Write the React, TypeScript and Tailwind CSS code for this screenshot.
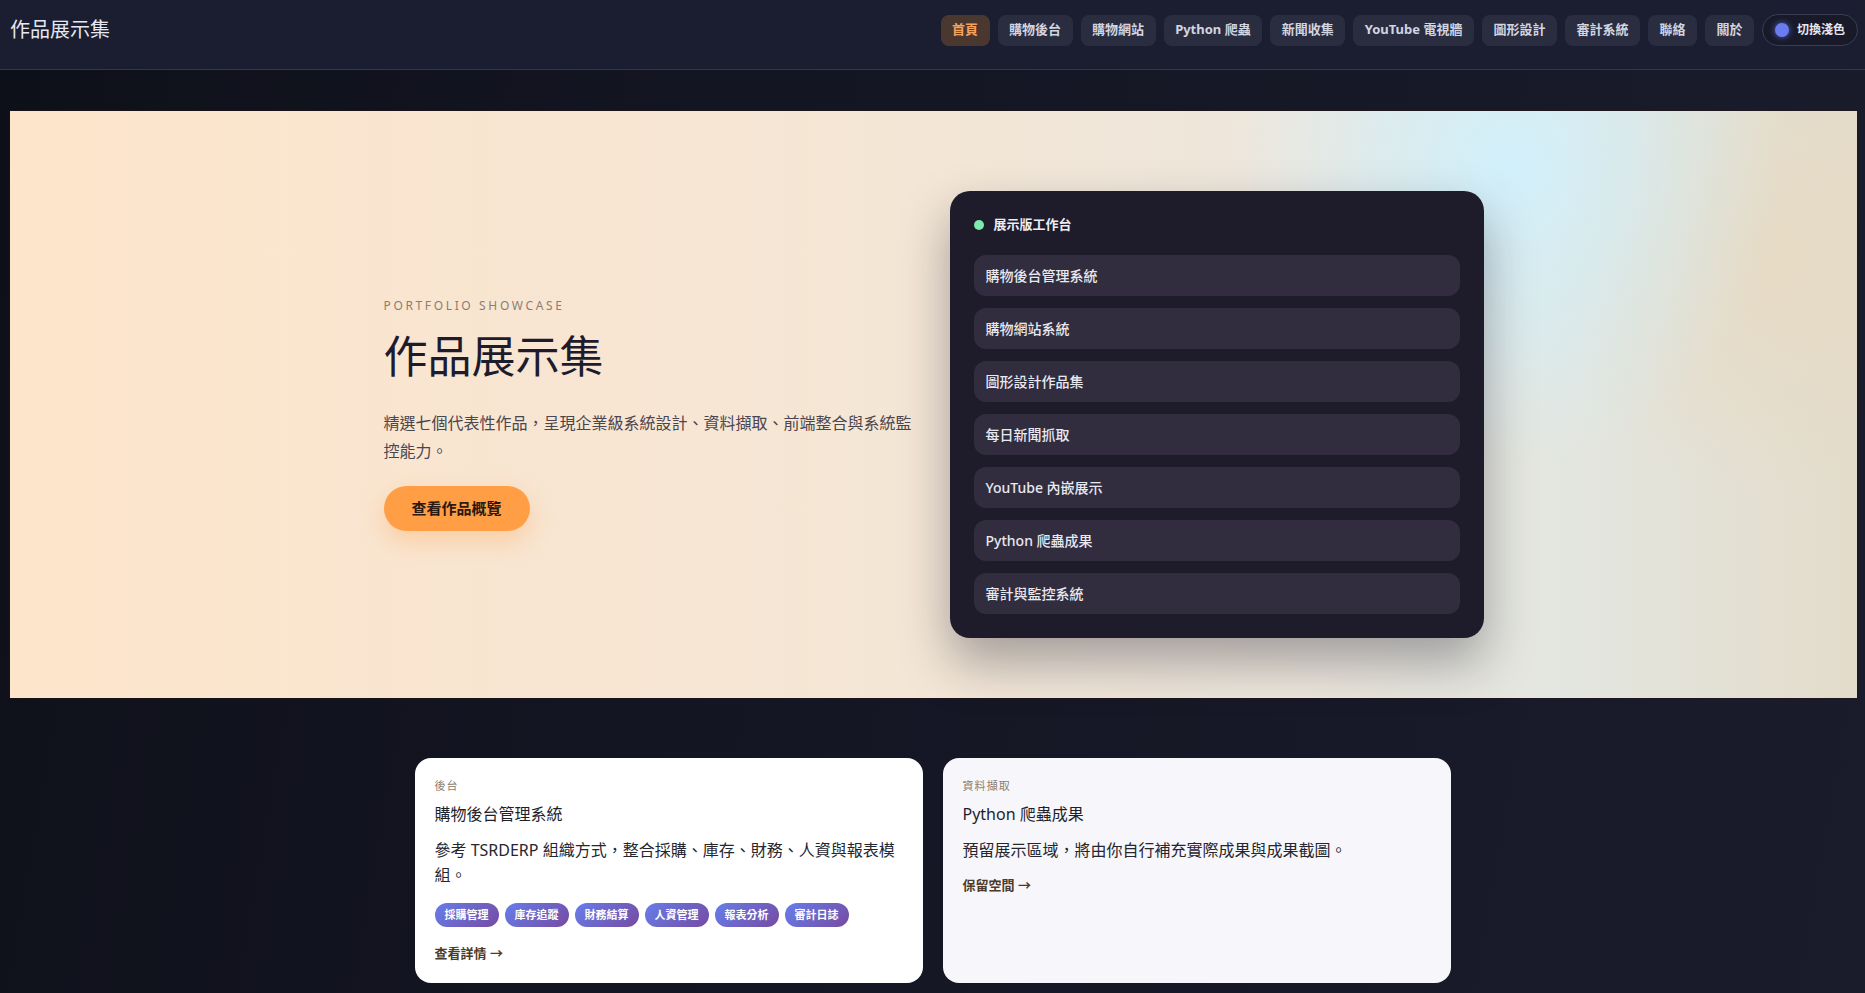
import React from "react";

const navItems = ["首頁", "購物後台", "購物網站", "Python 爬蟲", "新聞收集", "YouTube 電視牆", "圖形設計", "審計系統", "聯絡", "關於"];

const rows = ["購物後台管理系統", "購物網站系統", "圖形設計作品集", "每日新聞抓取", "YouTube 內嵌展示", "Python 爬蟲成果", "審計與監控系統"];

const tags = ["採購管理", "庫存追蹤", "財務結算", "人資管理", "報表分析", "審計日誌"];

export default function App() {
  return (
    <div className="min-h-screen bg-[linear-gradient(100deg,#0e1019_0%,#151624_45%,#1a1c2c_100%)] font-['Noto_Sans','Noto_Sans_CJK_TC',sans-serif]">
      <header className="h-[70px] flex justify-between items-start pl-[10px] pr-[7px] bg-[#1b1e30] border-b border-[#34374b]">
        <div className="mt-[16px] text-[20px] leading-[28px] text-[#e6e8f2]">作品展示集</div>
        <nav className="mt-[14px] flex items-center gap-2">
          {navItems.map((n, i) => (
            <button
              key={n}
              className={
                i === 0
                  ? "h-[31px] px-[11.5px] rounded-lg text-[13px] font-bold bg-[#4a3830] text-[#f4a25c] whitespace-nowrap"
                  : "h-[31px] px-[11.5px] rounded-lg text-[13px] font-bold bg-[#2a2d40] text-[#d2d5e0] whitespace-nowrap"
              }
            >
              {n}
            </button>
          ))}
          <button className="h-[32px] pl-3 pr-3 rounded-full border border-[#3a3e55] bg-[#181a2a] flex items-center gap-2 text-[12px] font-bold text-[#e4e6f0] whitespace-nowrap">
            <span className="w-[14px] h-[14px] rounded-full bg-[#6a7cf0] shadow-[0_0_6px_rgba(106,124,240,0.8)]"></span>
            切換淺色
          </button>
        </nav>
      </header>

      <main className="pt-[41px] pb-10">
        <section className="ml-[10px] mr-[8px] h-[587px] bg-[radial-gradient(ellipse_15%_50%_at_81%_10%,rgba(208,240,252,0.95),rgba(215,238,245,0)_100%),radial-gradient(ellipse_12%_40%_at_95%_25%,rgba(232,216,190,0.7),rgba(232,216,190,0)_100%),linear-gradient(90deg,#fde5cb_0%,#f5e6d5_45%,#ede6dc_70%,#e3e6e0_84%,#e3dccb_100%)] shadow-[0_0_0_1px_rgba(40,20,20,0.4)]">
          <div className="max-w-[1100px] mx-auto grid grid-cols-2 gap-8 items-center pt-[80px] pb-[60px]">
            <div>
              <div className="text-[12px] leading-4 tracking-[0.22em] text-[#8b7d70]">PORTFOLIO SHOWCASE</div>
              <h1 className="mt-4 text-[44px] leading-[1.2] font-normal text-[#1e1b2c]">作品展示集</h1>
              <p className="mt-[26px] text-[16px] leading-[28px] text-[#4a4650]">
                精選七個代表性作品，呈現企業級系統設計、資料擷取、前端整合與系統監控能力。
              </p>
              <button className="mt-[21px] h-[45px] px-7 rounded-full bg-[#ff9e45] text-[15px] font-bold text-[#2a1a10] shadow-[0_10px_24px_rgba(255,150,60,0.3)]">
                查看作品概覽
              </button>
            </div>
            <div className="rounded-[20px] bg-[#1e1b2b] p-6 shadow-[0_24px_50px_rgba(20,20,40,0.35)]">
              <div className="flex items-center gap-[10px] h-5">
                <span className="w-2.5 h-2.5 rounded-full bg-[#7fe8ad]"></span>
                <span className="text-[13px] font-bold text-[#ececf3]">展示版工作台</span>
              </div>
              <div className="mt-5 flex flex-col gap-3">
                {rows.map((r) => (
                  <div key={r} className="h-[41px] rounded-xl bg-[#312d3f] px-3 flex items-center text-[14px] font-medium text-[#e8e8f0]">
                    {r}
                  </div>
                ))}
              </div>
            </div>
          </div>
        </section>

        <section className="mt-[60px] max-w-[1100px] mx-auto px-8 grid grid-cols-2 gap-5">
          <div className="rounded-2xl bg-white p-5">
            <div className="text-[11px] leading-4 tracking-[0.1em] text-[#8d7e70]">後台</div>
            <div className="mt-2 text-[16px] leading-6 text-[#1f1f2a]">購物後台管理系統</div>
            <p className="mt-3 text-[16px] leading-[25px] text-[#26262f]">
              參考 TSRDERP 組織方式，整合採購、庫存、財務、人資與報表模組。
            </p>
            <div className="mt-[15px] flex flex-wrap gap-1.5">
              {tags.map((t) => (
                <span key={t} className="h-6 px-2.5 rounded-full bg-[linear-gradient(135deg,#667eea,#764ba2)] text-[11px] font-bold text-white flex items-center">
                  {t}
                </span>
              ))}
            </div>
            <div className="mt-4 text-[13px] leading-5 font-bold text-[#4d3b2a]">查看詳情 →</div>
          </div>
          <div className="rounded-2xl bg-[#f6f6fb] p-5">
            <div className="text-[11px] leading-4 tracking-[0.1em] text-[#8d7e70]">資料擷取</div>
            <div className="mt-2 text-[16px] leading-6 text-[#1f1f2a]">Python 爬蟲成果</div>
            <p className="mt-3 text-[16px] leading-[25px] text-[#26262f]">
              預留展示區域，將由你自行補充實際成果與成果截圖。
            </p>
            <div className="mt-3 text-[13px] leading-5 font-bold text-[#4d3b2a]">保留空間 →</div>
          </div>
        </section>
      </main>
    </div>
  );
}
